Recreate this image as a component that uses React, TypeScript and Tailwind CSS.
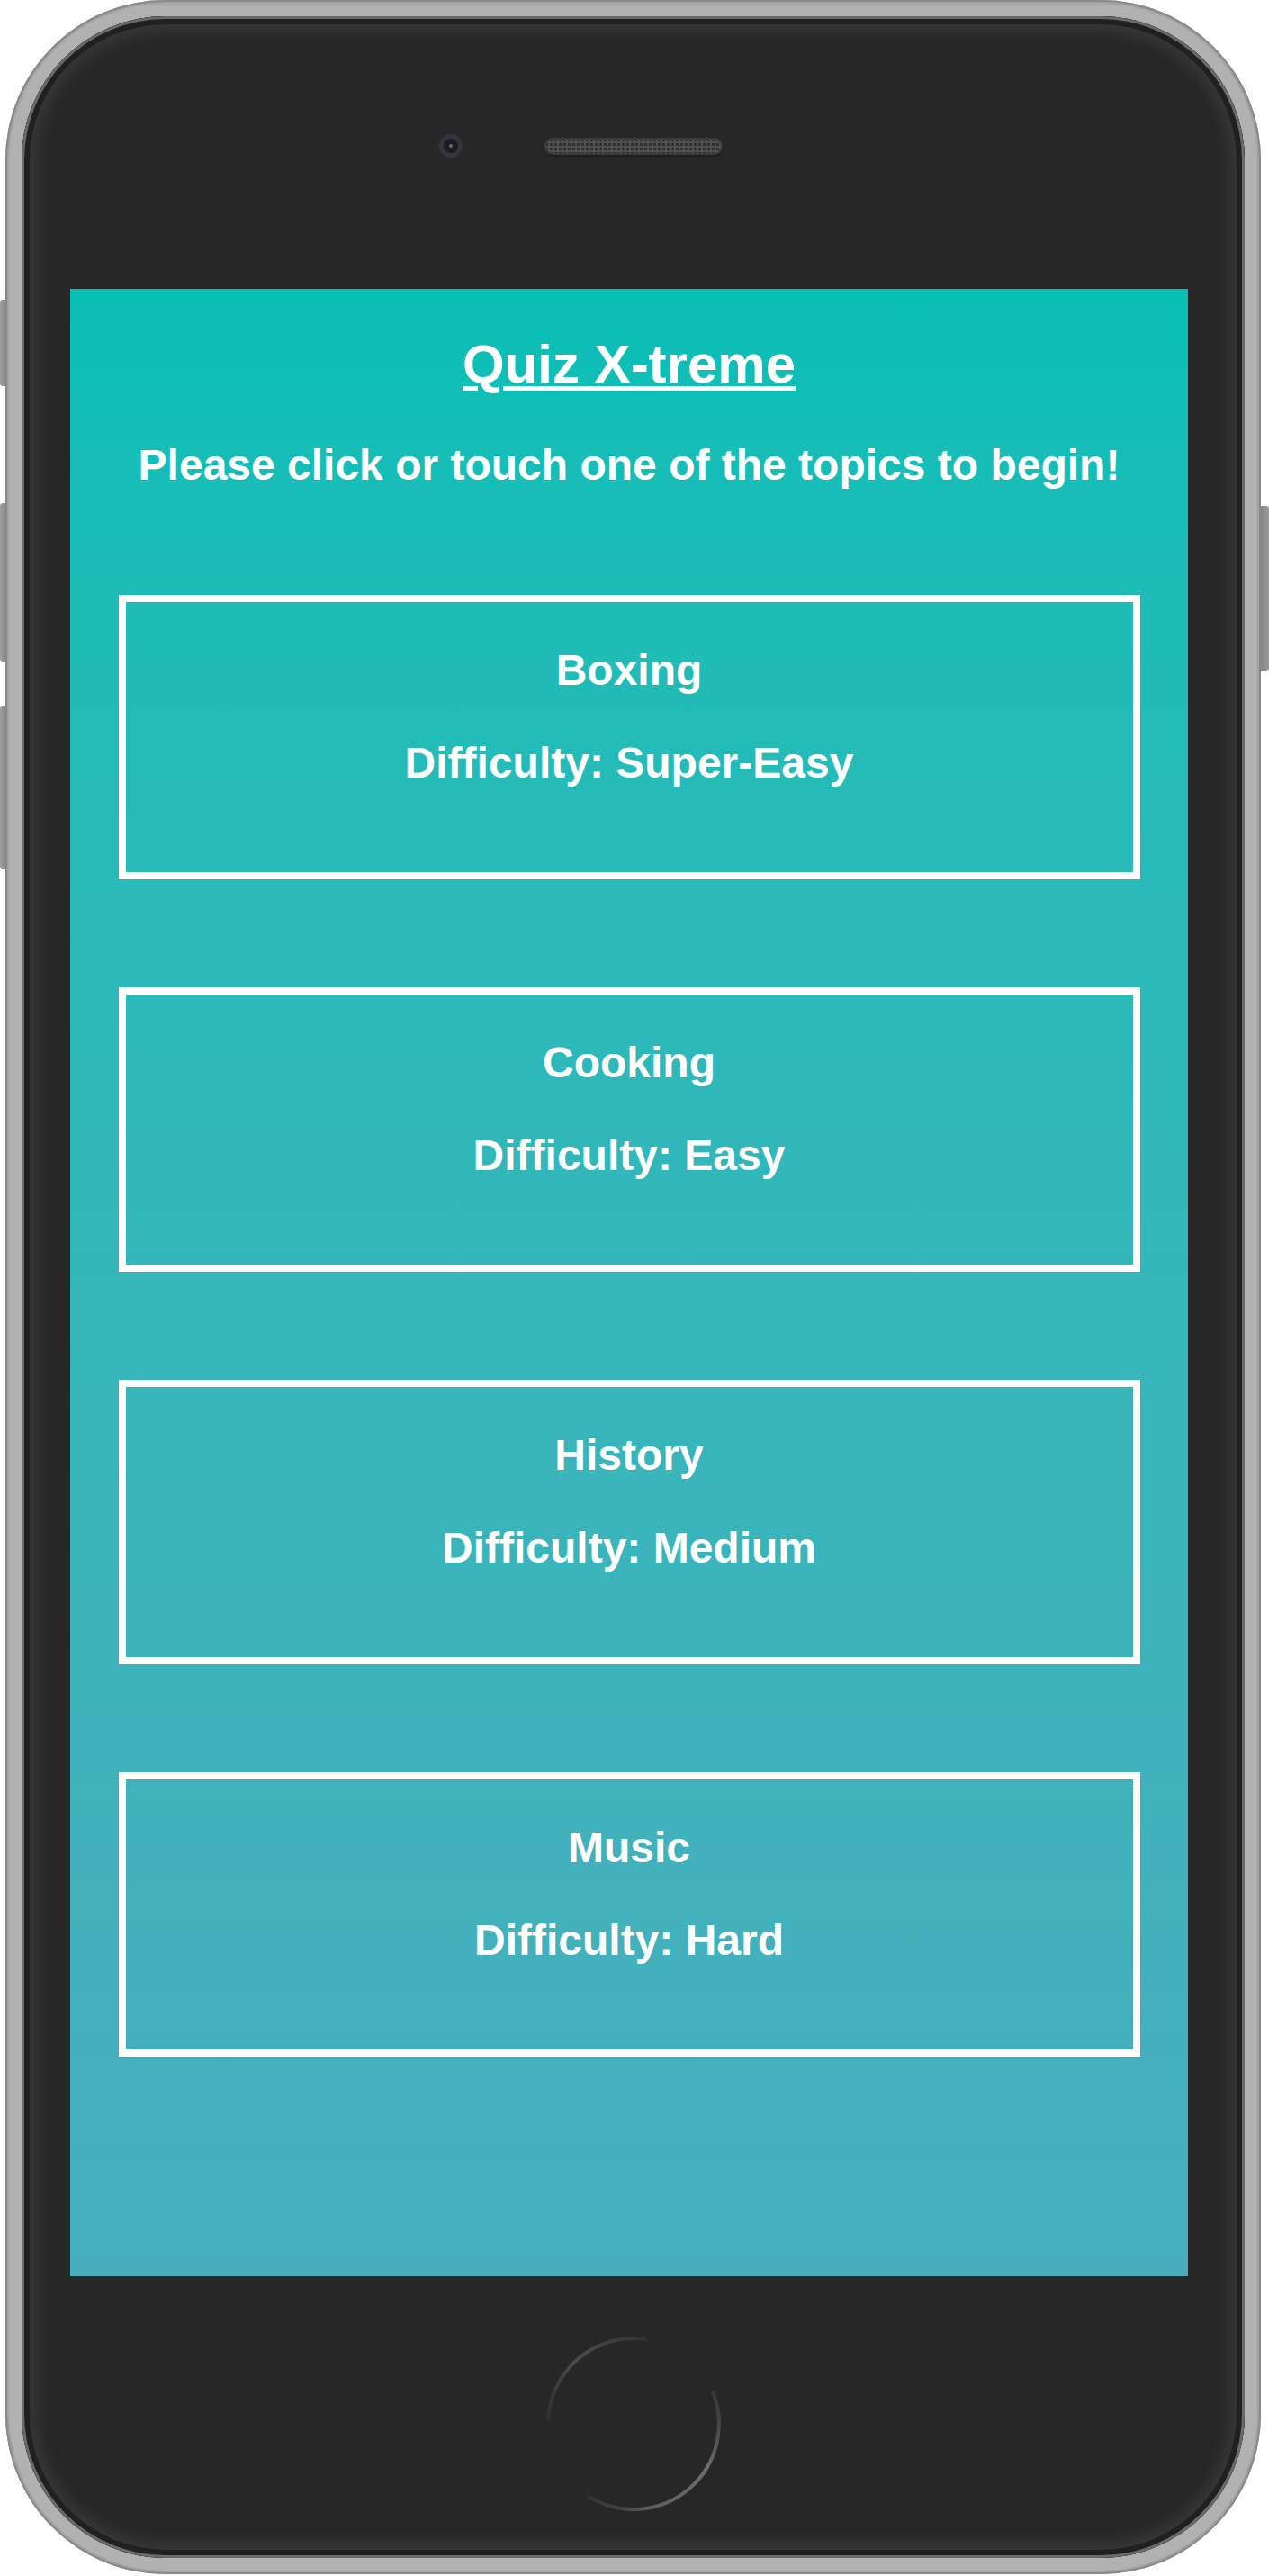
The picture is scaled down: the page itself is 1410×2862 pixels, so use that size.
import React from "react";

const topics = [
  { name: "Boxing", difficulty: "Super-Easy" },
  { name: "Cooking", difficulty: "Easy" },
  { name: "History", difficulty: "Medium" },
  { name: "Music", difficulty: "Hard" },
];

function HomeButton() {
  return (
    <svg width="200" height="200" viewBox="0 0 200 200" className="blur-[0.6px]">
      <defs>
        <linearGradient id="arcA" x1="190" y1="50" x2="40" y2="190" gradientUnits="userSpaceOnUse">
          <stop offset="0" stopColor="#5a5a5a" stopOpacity="0.2" />
          <stop offset="0.35" stopColor="#6e6e6e" />
          <stop offset="0.75" stopColor="#5c5c5c" />
          <stop offset="1" stopColor="#444" stopOpacity="0.2" />
        </linearGradient>
        <linearGradient id="arcB" x1="5" y1="110" x2="120" y2="5" gradientUnits="userSpaceOnUse">
          <stop offset="0" stopColor="#444" stopOpacity="0.2" />
          <stop offset="0.5" stopColor="#4c4c4c" />
          <stop offset="1" stopColor="#555" stopOpacity="0.2" />
        </linearGradient>
      </defs>
      <path d="M187.4 62.9 A95 95 0 0 1 49.7 180.6" fill="none" stroke="url(#arcA)" strokeWidth="4" />
      <path d="M5.1 96.7 A95 95 0 0 1 113.2 5.9" fill="none" stroke="url(#arcB)" strokeWidth="4" />
    </svg>
  );
}

export default function App() {
  return (
    <div className="relative h-[2862px] w-[1410px] overflow-hidden bg-white font-['Liberation_Sans',Arial,sans-serif]">
      {/* side buttons */}
      <div className="absolute left-0 top-[333px] h-[96px] w-[12px] rounded-l-[3px] bg-[linear-gradient(to_right,#a0a0a0,#8a8a8a_50%,#767676)]" />
      <div className="absolute left-0 top-[559px] h-[176px] w-[12px] rounded-l-[3px] bg-[linear-gradient(to_right,#a0a0a0,#8a8a8a_50%,#767676)]" />
      <div className="absolute left-0 top-[784px] h-[181px] w-[12px] rounded-l-[3px] bg-[linear-gradient(to_right,#a0a0a0,#8a8a8a_50%,#767676)]" />
      <div className="absolute left-[1396px] top-[562px] h-[183px] w-[14px] rounded-r-[3px] bg-[linear-gradient(to_right,#767676,#8a8a8a_50%,#9a9a9a)]" />

      <div className="relative ml-[6px] h-[2860px] w-[1395px] rounded-[178px] bg-[#b1b1b1] p-[18px] shadow-[inset_0_0_0_2px_#8a8a8a,inset_0_0_0_4px_#a2a2a2]">
        <div className="flex h-full flex-col rounded-[160px] bg-[#272727] shadow-[inset_0_0_0_3px_#6a6a6a,inset_0_0_0_9px_#202020,inset_0_0_14px_18px_#363636]">
          {/* camera + speaker */}
          <div className="flex h-[303px] shrink-0 items-start pl-[464px] pt-[131px]">
            <div className="flex h-[26px] w-[26px] items-center justify-center rounded-full bg-[#34343c] shadow-[0_0_6px_2px_#2b2b30]">
              <div className="flex h-[16px] w-[16px] items-center justify-center rounded-full bg-[#1b1b20]">
                <div className="h-[4px] w-[4px] rounded-full bg-[#6a6a72]" />
              </div>
            </div>
            <div className="ml-[91px] mt-[4px] h-[19px] w-[198px] rounded-full bg-[#505050] bg-[radial-gradient(circle,#2e2e2e_1.4px,transparent_1.6px)] bg-[length:5px_5px] shadow-[inset_0_0_0_2px_#3c3c3c,0_2px_3px_#1e1e1e]" />
          </div>

          {/* screen */}
          <div className="ml-[54px] flex h-[2208px] w-[1242px] shrink-0 flex-col items-center bg-linear-to-b from-[#07bfb6] to-[#48aebe] text-white">
            <h1 className="mt-[49px] text-[60px] font-bold leading-[69px] underline decoration-[5px] underline-offset-[4px]">
              Quiz X-treme
            </h1>
            <p className="mt-[50px] text-[48px] font-bold leading-[55px]">
              Please click or touch one of the topics to begin!
            </p>
            <div className="mt-[117px] flex w-[1135px] flex-col gap-[120px]">
              {topics.map((t) => (
                <div
                  key={t.name}
                  className="h-[316px] border-[8px] border-white pt-[48px] text-center text-[48px] font-bold leading-[55px]"
                >
                  <p>{t.name}</p>
                  <p className="mt-[48px]">Difficulty: {t.difficulty}</p>
                </div>
              ))}
            </div>
          </div>

          {/* home button */}
          <div className="flex flex-1 justify-center pt-[64px]">
            <HomeButton />
          </div>
        </div>
      </div>
    </div>
  );
}
